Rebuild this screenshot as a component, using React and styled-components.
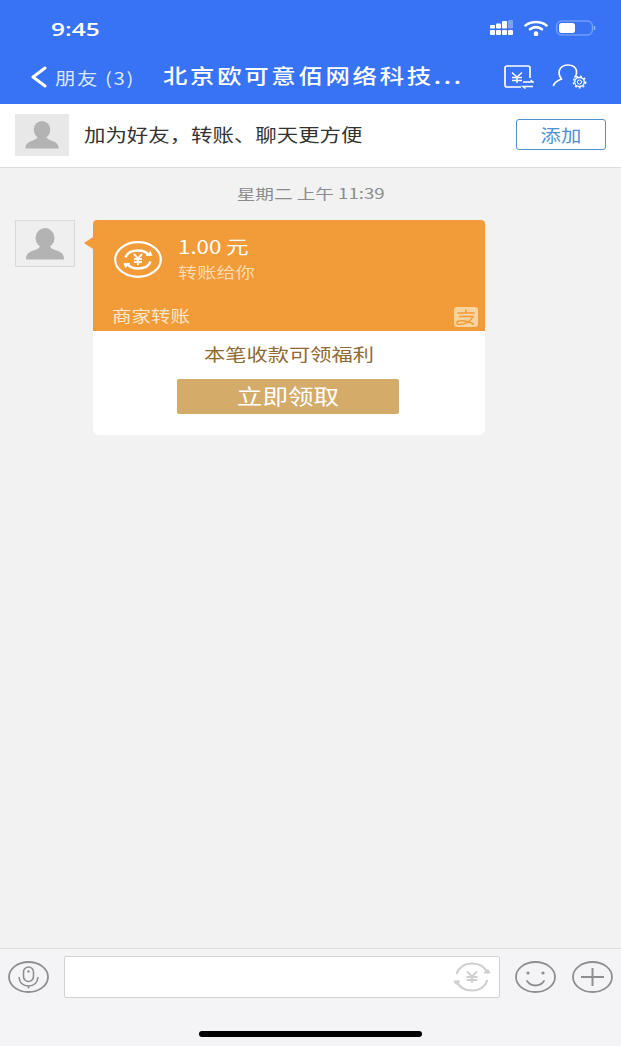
import React from "react";
import styled, { createGlobalStyle } from "styled-components";

const Global = createGlobalStyle`
  html, body { margin: 0; padding: 0; background: #f2f2f3; }
  body { font-family: "Noto Sans CJK SC", "Open Sans", sans-serif; }
  * { box-sizing: border-box; }
`;

const Page = styled.div`
  width: 621px; height: 1046px; display: flex; flex-direction: column; overflow: hidden; background: #f2f2f3;
`;
const Wide = styled.span`
  display: inline-block; white-space: nowrap; line-height: 1;
  font-size: ${p => p.$size}px;
  color: ${p => p.$color || "inherit"};
  font-weight: ${p => p.$weight || 400};
  letter-spacing: ${p => p.$track || 0}px;
  transform: scaleX(${p => p.$scale || 1.2});
  transform-origin: ${p => p.$origin || "left"} center;
`;
const Header = styled.header`
  height: 104px; background: #3872f5; color: #fff; display: flex; flex-direction: column; flex: none;
`;
const StatusBar = styled.div`
  height: 58px; padding: 20px 25px 0 51px; display: flex; justify-content: space-between; align-items: flex-start;
`;
const Time = styled(Wide)`
  font-family: "Open Sans", sans-serif; line-height: 18px;
`;
const StatusIcons = styled.div`
  display: flex; align-items: center; gap: 8.500px; height: 16px;
`;
const NavBar = styled.div`
  height: 38px; padding: 0 0 0 30px; display: flex; align-items: center;
`;
const BackGroup = styled.div`
  width: 133px; display: flex; align-items: center; gap: 8px; flex: none;
`;
const Title = styled.div`
  width: 341px; flex: none;
`;
const NavIcons = styled.div`
  display: flex; align-items: center; gap: 18px;
`;
const Banner = styled.section`
  height: 64px; background: #fff; border-bottom: 1px solid #dcdcdc; padding: 10px 15px 0; display: flex; align-items: flex-start; flex: none;
`;
const BannerAvatar = styled.div`
  width: 54px; height: 42px; background: #e8e8e8; display: flex; align-items: center; justify-content: center; flex: none;
`;
const BannerText = styled.div`
  flex: 1; height: 40px; padding-left: 15px; display: flex; align-items: center; color: #333;
`;
const AddButton = styled.button`
  width: 90px; height: 31px; margin-top: 5px; padding: 0 0 1px; background: #fff; border: 1.500px solid #4f92d2; border-radius: 3px; color: #4f92d2;
  font-family: inherit; display: flex; align-items: center; justify-content: center; flex: none;
`;
const Chat = styled.main`
  flex: 1; padding: 0 15px; display: flex; flex-direction: column;
`;
const Stamp = styled.div`
  height: 52px; padding-bottom: 2px; display: flex; align-items: center; justify-content: center; color: #8b8b8b;
`;
const Message = styled.div`
  display: flex; align-items: flex-start;
`;
const Avatar = styled.div`
  width: 60px; height: 47px; background: #efefef; border: 1px solid #d9d9d9; display: flex; align-items: center; justify-content: center; flex: none;
`;
const Card = styled.article`
  position: relative; width: 392px; margin-left: 18px; height: 215px; background: #fff; border-radius: 6px; display: flex; flex-direction: column;
  &::before {
    content: ""; position: absolute; left: -9px; top: 17px; width: 0; height: 0;
    border-style: solid; border-width: 6px 9px 6px 0; border-color: transparent #f29b39 transparent transparent;
  }
`;
const CardTop = styled.div`
  height: 111px; background: #f29b39; border-radius: 4px 4px 0 0; display: flex; flex-direction: column; color: #fff;
`;
const CardMain = styled.div`
  height: 76px; padding: 17px 0 0 21px; display: flex; align-items: flex-start; gap: 16px;
`;
const CoinSlot = styled.div`
  margin-top: 4px; display: flex; flex: none;
`;
const Amounts = styled.div`
  display: flex; flex-direction: column; gap: 9px;
`;
const CardFoot = styled.div`
  height: 35px; padding: 11px 6px 0 19px; display: flex; align-items: flex-start; justify-content: space-between; color: #fde7cb;
`;
const Benefit = styled.div`
  height: 48px; padding-bottom: 4px; display: flex; align-items: center; justify-content: center; color: #8f6a33;
`;
const ClaimButton = styled.button`
  width: 222px; height: 35px; align-self: center; margin-right: 2px; border: none; padding: 0 0 3px; border-radius: 2px; background: #d4ab69; color: #fff;
  font-family: inherit; display: flex; align-items: center; justify-content: center;
`;
const Footer = styled.footer`
  height: 98px; flex: none; background: #f4f4f6; border-top: 1px solid #dcdcdc; display: flex; flex-direction: column;
`;
const InputRow = styled.div`
  height: 49px; padding: 7px 8px 0; display: flex; align-items: flex-start;
`;
const RoundIcon = styled.div`
  height: 42px; display: flex; align-items: center; flex: none;
`;
const InputBox = styled.div`
  width: 436px; height: 42px; margin: 0 15px; background: #fff; border: 1px solid #d2d2d2; border-radius: 2px; display: flex; align-items: center; justify-content: flex-end; padding-right: 8px; flex: none;
`;
const TrailIcons = styled.div`
  display: flex; gap: 16px;
`;
const HomeRow = styled.div`
  flex: 1; display: flex; justify-content: center; padding-top: 33px;
`;
const HomeBar = styled.div`
  width: 223px; height: 6px; background: #000; border-radius: 3px;
`;

const Person = ({ w, h, c = "#b3b3b3" }) => (
  <svg width={w} height={h} viewBox="0 0 40 32">
    <ellipse cx="20" cy="10" rx="9.500" ry="10" fill={c} />
    <path d="M15 17c0 3-2 4-8 6-4 1.500-6 4-6 8.500h38c0-4.500-2-7-6-8.500-6-2-8-3-8-6z" fill={c} />
  </svg>
);
const Signal = () => (
  <svg width="26" height="16" viewBox="0 0 26 16" fill="#fff">
    {[1, 7, 13, 19].map(x => <rect key={x} x={x} y="10" width="5" height="5" rx="1" />)}
    <rect x="1" y="5" width="5" height="3.500" rx="1" />
    <rect x="7" y="3.500" width="5" height="5" rx="1" />
    <rect x="13" y="1" width="5" height="7.500" rx="1" />
    <rect x="19" y="0" width="5" height="8.500" rx="1" opacity=".35" />
  </svg>
);
const Wifi = () => (
  <svg width="24" height="16" viewBox="0 0 24 16" fill="none" stroke="#fff" strokeWidth="2.600" strokeLinecap="round">
    <path d="M1.500 5.500C7.500 .9 16.500 .9 22.500 5.500" />
    <path d="M6 9.200c3.700-2.600 8.300-2.600 12 0" />
    <path d="M12 14v-.5" strokeWidth="4.500" />
  </svg>
);
const Battery = () => (
  <svg width="40" height="16" viewBox="0 0 40 16">
    <rect x=".7" y="1" width="35.600" height="14" rx="4.500" fill="none" stroke="#fff" strokeOpacity=".45" />
    <rect x="3" y="3" width="16" height="10" rx="2.500" fill="#fff" />
    <rect x="37.700" y="6" width="1.600" height="4" rx=".8" fill="#fff" fillOpacity=".5" />
  </svg>
);
const Chevron = () => (
  <svg width="17" height="22" viewBox="0 0 17 22" fill="none" stroke="#fff" strokeWidth="3" strokeLinecap="round" strokeLinejoin="round">
    <path d="M15 2 3 11l12 9" />
  </svg>
);
const TransferIcon = () => (
  <svg width="30" height="24" viewBox="0 0 30 24" fill="none" stroke="#fff" strokeWidth="1.700">
    <path d="M17 22H3Q1 22 1 20V3Q1 1 3 1H24Q26 1 26 3V13" />
    <path d="M8 7.500l5 4.500 5-4.500M13 12v6M8 12.500h10M8 15.500h10" strokeWidth="1.500" />
    <path d="M19 17h10l-2.500-2M29 21.500H19l2.500 2" strokeWidth="1.500" />
  </svg>
);
const PersonGear = () => (
  <svg width="36" height="26" viewBox="0 0 36 26" fill="none" stroke="#fff" strokeWidth="1.700" strokeLinecap="round">
    <path d="M1.500 21.500C2.500 17.500 6 16.500 9.500 15 7 12 6.500 9 7.500 6 9 2.500 12.500 1 16 1c4 0 7.500 2 8.500 5.500.5 2.500 0 4.500-1.500 6.500" />
    <ellipse cx="27.500" cy="18" rx="4.800" ry="4.500" strokeWidth="1.300" />
    <ellipse cx="27.500" cy="18" rx="2.200" ry="2" strokeWidth="1" />
    <ellipse cx="27.500" cy="18" rx="6.200" ry="5.800" strokeWidth="1.400" strokeDasharray="2 2" strokeLinecap="butt" />
  </svg>
);
const Coin = () => (
  <svg width="48" height="37" viewBox="0 0 48 37" fill="none" stroke="#fff">
    <ellipse cx="24" cy="18.500" rx="22.800" ry="17.300" strokeWidth="2.200" />
    <path d="M11.500 16.500C13 12 18 9.500 24 9.500c4.500 0 8.500 1.500 10.500 4.500" strokeWidth="2.400" />
    <path d="M36.500 20.500C35 25 30 27.500 24 27.500c-4.500 0-8.500-1.500-10.500-4.500" strokeWidth="2.400" />
    <path d="M32 14.500h6l-1.500-4zM16 22.500h-6l1.500 4z" fill="#fff" strokeWidth=".8" />
    <path d="M20 13l4 4.500 4-4.500M24 17.500V24M20 18h8M20 21h8" strokeWidth="1.800" />
  </svg>
);
const AlipayBadge = () => (
  <svg width="25" height="20" viewBox="0 0 25 20">
    <rect width="24" height="20" rx="3" fill="#fad39f" />
    <path d="M3.500 6h17M12 2.500V6M5 9.500h14c-2 4-6 7.500-14 8-2.500 0-3-3 0-3.500 5-.5 11 1 15 3.500" fill="none" stroke="#f29b39" strokeWidth="1.500" />
  </svg>
);
const Mic = () => (
  <svg width="41" height="32" viewBox="0 0 41 32" fill="none" stroke="#8e8e8e">
    <ellipse cx="20.500" cy="16" rx="19.500" ry="15" strokeWidth="1.800" />
    <rect x="15.500" y="6" width="10" height="14.500" rx="5" strokeWidth="1.600" />
    <circle cx="20.500" cy="10.500" r="1.200" fill="#8e8e8e" stroke="none" />
    <path d="M11 16c.5 5.500 4 9 9.500 9s9-3.500 9.500-9" strokeWidth="1.600" />
    <path d="M20.500 25v2.500" strokeWidth="1.600" />
  </svg>
);
const YenGhost = () => (
  <svg width="38" height="30" viewBox="0 0 38 30" fill="none" stroke="#cfcfcf" strokeWidth="2.200">
    <path d="M3.500 12C6 5 12 1.500 19 1.500S32 5 34.500 11" />
    <path d="M34.500 18C32 25 26 28.500 19 28.500S6 25 3.500 19" />
    <path d="M31 11h6l-2-3.500zM7 19H1l2 3.500z" fill="#cfcfcf" strokeWidth="1" />
    <path d="M14 9.500 19 14.500l5-5M19 14.500V21M13.500 15h11M13.500 18h11" strokeWidth="1.800" />
  </svg>
);
const Smile = () => (
  <svg width="41" height="32" viewBox="0 0 41 32" fill="none" stroke="#8e8e8e">
    <ellipse cx="20.500" cy="16" rx="19.500" ry="15" strokeWidth="1.800" />
    <ellipse cx="13" cy="12" rx="1.600" ry="1.500" fill="#8e8e8e" stroke="none" />
    <ellipse cx="28" cy="12" rx="1.600" ry="1.500" fill="#8e8e8e" stroke="none" />
    <path d="M12 20c2 3 5 4.500 8.500 4.500S27 23 29 20" strokeWidth="1.800" strokeLinecap="round" />
  </svg>
);
const Plus = () => (
  <svg width="41" height="32" viewBox="0 0 41 32" fill="none" stroke="#8e8e8e">
    <ellipse cx="20.500" cy="16" rx="19.500" ry="15" strokeWidth="1.800" />
    <path d="M9 16h23M20.500 7v18" strokeWidth="2" />
  </svg>
);

export default function App() {
  return (
    <Page>
      <Global />
      <Header>
        <StatusBar>
          <Time $size={18} $weight={600} $scale={1.36}>9:45</Time>
          <StatusIcons>
            <Signal />
            <Wifi />
            <Battery />
          </StatusIcons>
        </StatusBar>
        <NavBar>
          <BackGroup>
            <Chevron />
            <Wide $size={17} $scale={1.2} $track={1.3} $color="#dbe6fd">朋友 (3)</Wide>
          </BackGroup>
          <Title>
            <Wide $size={20} $scale={1.22} $track={2.2} $weight={500}>北京欧可意佰网络科技...</Wide>
          </Title>
          <NavIcons>
            <TransferIcon />
            <PersonGear />
          </NavIcons>
        </NavBar>
      </Header>
      <Banner>
        <BannerAvatar><Person w={36} h={28} /></BannerAvatar>
        <BannerText><Wide $size={18} $scale={1.19}>加为好友，转账、聊天更方便</Wide></BannerText>
        <AddButton><Wide $size={17} $scale={1.2} $origin="center">添加</Wide></AddButton>
      </Banner>
      <Chat>
        <Stamp><Wide $size={14} $scale={1.33} $origin="center">星期二 上午 11:39</Wide></Stamp>
        <Message>
          <Avatar><Person w={40} h={32} /></Avatar>
          <Card>
            <CardTop>
              <CardMain>
                <CoinSlot><Coin /></CoinSlot>
                <Amounts>
                  <Wide $size={18} $scale={1.24}>1.00 元</Wide>
                  <Wide $size={15} $scale={1.28} $color="#fcdcb2">转账给你</Wide>
                </Amounts>
              </CardMain>
              <CardFoot>
                <Wide $size={16} $scale={1.22}>商家转账</Wide>
                <AlipayBadge />
              </CardFoot>
            </CardTop>
            <Benefit><Wide $size={17} $scale={1.25} $origin="center">本笔收款可领福利</Wide></Benefit>
            <ClaimButton><Wide $size={21} $scale={1.22} $origin="center">立即领取</Wide></ClaimButton>
          </Card>
        </Message>
      </Chat>
      <Footer>
        <InputRow>
          <RoundIcon><Mic /></RoundIcon>
          <InputBox><YenGhost /></InputBox>
          <TrailIcons>
            <RoundIcon><Smile /></RoundIcon>
            <RoundIcon><Plus /></RoundIcon>
          </TrailIcons>
        </InputRow>
        <HomeRow><HomeBar /></HomeRow>
      </Footer>
    </Page>
  );
}
